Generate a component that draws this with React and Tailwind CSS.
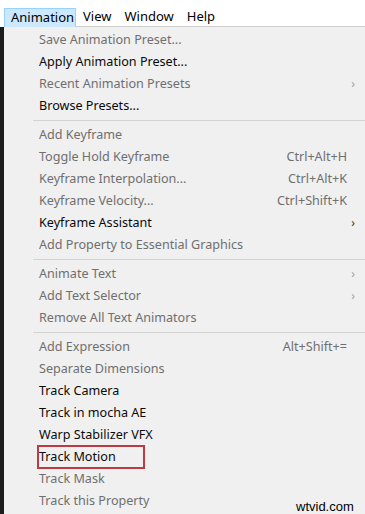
import React from 'react'

// ─────────────────────────────────────────────────────────────────────────────
// Menu data
// ─────────────────────────────────────────────────────────────────────────────

const GROUPS = [
  [
    { label: 'Save Animation Preset...', disabled: true },
    { label: 'Apply Animation Preset...' },
    { label: 'Recent Animation Presets', disabled: true, sub: true },
    { label: 'Browse Presets...' },
  ],
  [
    { label: 'Add Keyframe', disabled: true },
    { label: 'Toggle Hold Keyframe', disabled: true, key: 'Ctrl+Alt+H' },
    { label: 'Keyframe Interpolation...', disabled: true, key: 'Ctrl+Alt+K' },
    { label: 'Keyframe Velocity...', disabled: true, key: 'Ctrl+Shift+K' },
    { label: 'Keyframe Assistant', sub: true },
    { label: 'Add Property to Essential Graphics', disabled: true },
  ],
  [
    { label: 'Animate Text', disabled: true, sub: true },
    { label: 'Add Text Selector', disabled: true, sub: true },
    { label: 'Remove All Text Animators', disabled: true },
  ],
  [
    { label: 'Add Expression', disabled: true, key: 'Alt+Shift+=' },
    { label: 'Separate Dimensions', disabled: true },
    { label: 'Track Camera' },
    { label: 'Track in mocha AE' },
    { label: 'Warp Stabilizer VFX' },
    { label: 'Track Motion', marked: true },
    { label: 'Track Mask', disabled: true },
    { label: 'Track this Property', disabled: true },
  ],
]

function Row({ item }) {
  return (
    <div className={`relative h-[22px] flex items-center pl-[35px] pr-[6px] ${item.disabled ? 'text-[#6f6f6f]' : 'text-[#0a0a0a]'}`}>
      <span className="flex-1 whitespace-nowrap">{item.label}</span>
      {item.key && <span className="whitespace-nowrap">{item.key}</span>}
      <span className={`w-[12px] text-center text-[12px] ${item.disabled ? 'text-[#a0a0a0]' : 'text-[#333]'}`}>
        {item.sub ? '›' : ''}
      </span>
      {item.marked && (
        <div className="absolute left-[33px] top-[-1px] w-[108px] h-[24px] border-2 border-[#bd3a42]" />
      )}
    </div>
  )
}

export default function App() {
  return (
    <div
      className="relative w-[365px] h-[514px] overflow-hidden bg-white text-[13px]"
      style={{ fontFamily: '"Noto Sans", "Open Sans", sans-serif' }}
    >
      {/* ── Menu bar ── */}
      <div className="h-[27px] flex items-end bg-white">
        <div className="flex items-stretch h-[19px] ml-[4px] w-full">
          <div className="w-[72px] pl-[6px] flex items-center bg-[#cce8ff] border border-[#99d1ff] border-b-0 text-black">
            Animation
          </div>
          <div className="flex-1 flex items-center border-b border-[#cfcfcf] text-black">
            <span className="ml-[7px]">View</span>
            <span className="ml-[13px]">Window</span>
            <span className="ml-[13px]">Help</span>
          </div>
        </div>
      </div>

      {/* ── Dropdown ── */}
      <div className="flex h-[487px] text-[12.6px]">
        <div className="w-[4px] bg-[#1c1c1c]" />
        <div className="flex-1 bg-[#f0f0f0] pt-[2px]">
          {GROUPS.map((group, gi) => (
            <div key={gi}>
              {gi > 0 && (
                <div className="h-[7px] flex items-center pl-[29px]">
                  <div className="h-px w-full bg-[#d3d3d3]" />
                </div>
              )}
              {group.map(item => <Row key={item.label} item={item} />)}
            </div>
          ))}
        </div>
      </div>

      {/* watermark */}
      <div
        className="absolute left-[296px] top-[497px] text-[13px] text-black"
        style={{ fontFamily: '"Liberation Sans", Arial, sans-serif' }}
      >
        wtvid.com
      </div>
    </div>
  )
}
